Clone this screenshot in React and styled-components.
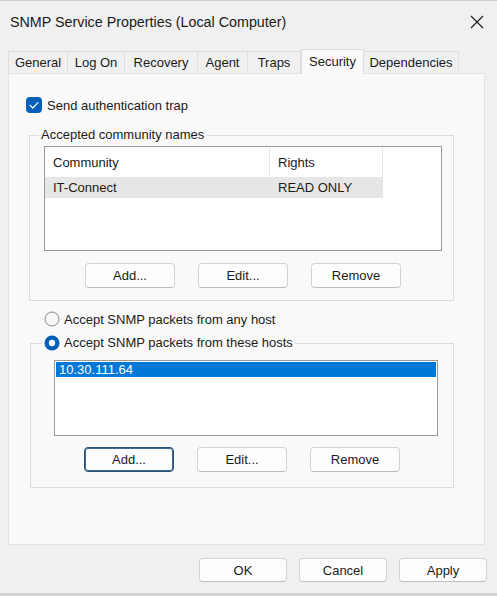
import React from "react";
import styled, { createGlobalStyle, css } from "styled-components";

const Global = createGlobalStyle`
  html, body { margin: 0; padding: 0; }
  body { font-family: "Liberation Sans", Arial, sans-serif; font-size: 13px; color: #1b1b1b; background: #f0f0f0; }
  * { box-sizing: border-box; }
`;

const Window = styled.div`
  width: 497px;
  height: 596px;
  background: #f0f0f0;
  border-top: 1px solid #cfcfcf;
  border-bottom: 3px solid #d3d3d3;
  display: flex;
  flex-direction: column;
`;

const TitleBar = styled.div`
  height: 41px;
  display: flex;
  align-items: center;
  justify-content: space-between;
  padding: 0 12px 0 10px;
`;

const Title = styled.div`
  font-size: 14.3px;
  color: #1a1a1a;
  padding-top: 1px;
`;

const CloseButton = styled.div`
  width: 16px;
  height: 16px;
  display: flex;
  align-items: center;
  justify-content: center;
  margin-top: 1px;
`;

const TabStrip = styled.div`
  display: flex;
  align-items: flex-end;
  height: 31px;
  padding: 6px 0 0 8px;
`;

const Tab = styled.div`
  width: ${(p) => p.$w}px;
  height: 22px;
  display: flex;
  align-items: center;
  justify-content: center;
  background: #f0f0f0;
  border: 1px solid #dedede;
  border-bottom: none;
  border-left: ${(p) => (p.$first ? "1px solid #dedede" : "none")};
  color: #1b1b1b;
  ${(p) =>
    p.$active &&
    css`
      height: 25px;
      background: #f9f9f9;
      border-left: 1px solid #dedede;
      align-items: flex-start;
      padding-top: 4px;
      margin-bottom: -1px;
      position: relative;
      z-index: 1;
    `}
`;

const Panel = styled.div`
  margin: 0 12px 0 8px;
  height: 472px;
  background: #f9f9f9;
  border: 1px solid #e3e3e3;
  display: flex;
  flex-direction: column;
  padding: 23px 0 0 0;
`;

const CheckRow = styled.label`
  display: flex;
  align-items: center;
  gap: 5px;
  margin-left: 17px;
  height: 16px;
`;

const Box = styled.span`
  width: 16px;
  height: 16px;
  display: inline-flex;
`;

const Group = styled.fieldset`
  margin: ${(p) => p.$mt}px 30px 0 ${(p) => p.$ml}px;
  padding: ${(p) => p.$pt}px 11px ${(p) => p.$pb}px 14px;
  border: 1px solid #dcdcdc;
  border-radius: 0;
  min-width: 0;
`;

const Legend = styled.legend`
  padding: 0 2px;
  margin-left: ${(p) => p.$ml}px;
  height: 16px;
  line-height: 16px;
  display: flex;
  align-items: center;
  gap: 4px;
`;

const List = styled.div`
  height: ${(p) => p.$h}px;
  margin: 0 ${(p) => p.$mr || 0}px 0 ${(p) => p.$ml || 0}px;
  background: #ffffff;
  border: 1px solid #9a9a9a;
  padding: ${(p) => p.$pad || 0}px;
`;

const HeaderRow = styled.div`
  display: flex;
  height: 30px;
`;

const HeaderCell = styled.div`
  width: ${(p) => p.$w}px;
  display: flex;
  align-items: center;
  padding-left: 8px;
  border-right: 1px solid #e8e8e8;
`;

const DataRow = styled.div`
  display: flex;
  height: 21px;
  width: 338px;
  background: ${(p) => (p.$selected ? "#e6e6e6" : "transparent")};
`;

const DataCell = styled.div`
  width: ${(p) => p.$w}px;
  display: flex;
  align-items: center;
  padding-left: 8px;
`;

const HostRow = styled.div`
  height: 15px;
  background: #0078d7;
  color: #ffffff;
  display: flex;
  align-items: center;
  padding-left: 3px;
`;

const ButtonRow = styled.div`
  display: flex;
  justify-content: center;
  gap: ${(p) => p.$gap}px;
  margin-top: ${(p) => p.$mt}px;
  padding-right: ${(p) => p.$pr || 0}px;
`;

const Button = styled.button`
  width: ${(p) => p.$w}px;
  height: ${(p) => p.$h}px;
  font-family: inherit;
  font-size: 13px;
  color: #1b1b1b;
  background: #fdfdfd;
  border: 1px solid #d2d2d2;
  border-bottom-color: #bdbdbd;
  border-radius: 4px;
  padding: 0;
  display: flex;
  align-items: center;
  justify-content: center;
  ${(p) =>
    p.$focused &&
    css`
      border: 1px solid #2a4f70;
      box-shadow: inset 0 0 0 1px #3d6a92;
    `}
`;

const RadioRow = styled.label`
  display: flex;
  align-items: center;
  gap: 4px;
  margin: 10px 0 0 35px;
  height: 16px;
`;

const Footer = styled.div`
  display: flex;
  justify-content: flex-end;
  gap: 12px;
  padding: 13px 10px 0 0;
`;

const CheckIcon = () => (
  <svg width="16" height="16" viewBox="0 0 16 16">
    <rect x="0.5" y="0.5" width="15" height="15" rx="3" fill="#005fb8" stroke="#005fb8" />
    <path d="M4 8.3 L6.8 11 L12 5.6" fill="none" stroke="#ffffff" strokeWidth="1.2" strokeLinecap="round" strokeLinejoin="round" />
  </svg>
);

const RadioIcon = ({ checked }) => (
  <svg width="16" height="16" viewBox="0 0 16 16">
    {checked ? (
      <>
        <circle cx="8" cy="8" r="7.5" fill="#005fb8" />
        <circle cx="8" cy="8" r="3.2" fill="#ffffff" />
      </>
    ) : (
      <circle cx="8" cy="8" r="7" fill="#f7f7f7" stroke="#8a8a8a" strokeWidth="1" />
    )}
  </svg>
);

const tabs = [
  { label: "General", w: 60 },
  { label: "Log On", w: 57 },
  { label: "Recovery", w: 73 },
  { label: "Agent", w: 50 },
  { label: "Traps", w: 53 },
  { label: "Security", w: 63 },
  { label: "Dependencies", w: 95 },
];

export default function App() {
  return (
    <>
      <Global />
      <Window>
        <TitleBar>
          <Title>SNMP Service Properties (Local Computer)</Title>
          <CloseButton>
            <svg width="14" height="14" viewBox="0 0 14 14">
              <path d="M1 1 L13 13 M13 1 L1 13" stroke="#1a1a1a" strokeWidth="1.1" fill="none" />
            </svg>
          </CloseButton>
        </TitleBar>
        <TabStrip>
          {tabs.map((t, i) => (
            <Tab key={t.label} $w={t.w} $first={i === 0} $active={t.label === "Security"}>
              {t.label}
            </Tab>
          ))}
        </TabStrip>
        <Panel>
          <CheckRow>
            <Box>
              <CheckIcon />
            </Box>
            Send authentication trap
          </CheckRow>

          <Group $mt={14} $ml={20} $pt={3} $pb={12}>
            <Legend $ml={-5}>Accepted community names</Legend>
            <List $h={105}>
              <HeaderRow>
                <HeaderCell $w={225}>Community</HeaderCell>
                <HeaderCell $w={113}>Rights</HeaderCell>
              </HeaderRow>
              <DataRow $selected>
                <DataCell $w={225}>IT-Connect</DataCell>
                <DataCell $w={113}>READ ONLY</DataCell>
              </DataRow>
            </List>
            <ButtonRow $gap={23} $mt={12}>
              <Button $w={90} $h={25}>Add...</Button>
              <Button $w={90} $h={25}>Edit...</Button>
              <Button $w={90} $h={25}>Remove</Button>
            </ButtonRow>
          </Group>

          <RadioRow>
            <RadioIcon />
            Accept SNMP packets from any host
          </RadioRow>

          <Group $mt={8} $ml={21} $pt={9} $pb={15}>
            <Legend $ml={-3}>
              <RadioIcon checked />
              Accept SNMP packets from these hosts
            </Legend>
            <List $h={76} $ml={9} $mr={4} $pad={1}>
              <HostRow>10.30.111.64</HostRow>
            </List>
            <ButtonRow $gap={23} $mt={11} $pr={3}>
              <Button $w={90} $h={25} $focused>Add...</Button>
              <Button $w={90} $h={25}>Edit...</Button>
              <Button $w={90} $h={25}>Remove</Button>
            </ButtonRow>
          </Group>
        </Panel>
        <Footer>
          <Button $w={88} $h={24}>OK</Button>
          <Button $w={88} $h={24}>Cancel</Button>
          <Button $w={88} $h={24}>Apply</Button>
        </Footer>
      </Window>
    </>
  );
}
